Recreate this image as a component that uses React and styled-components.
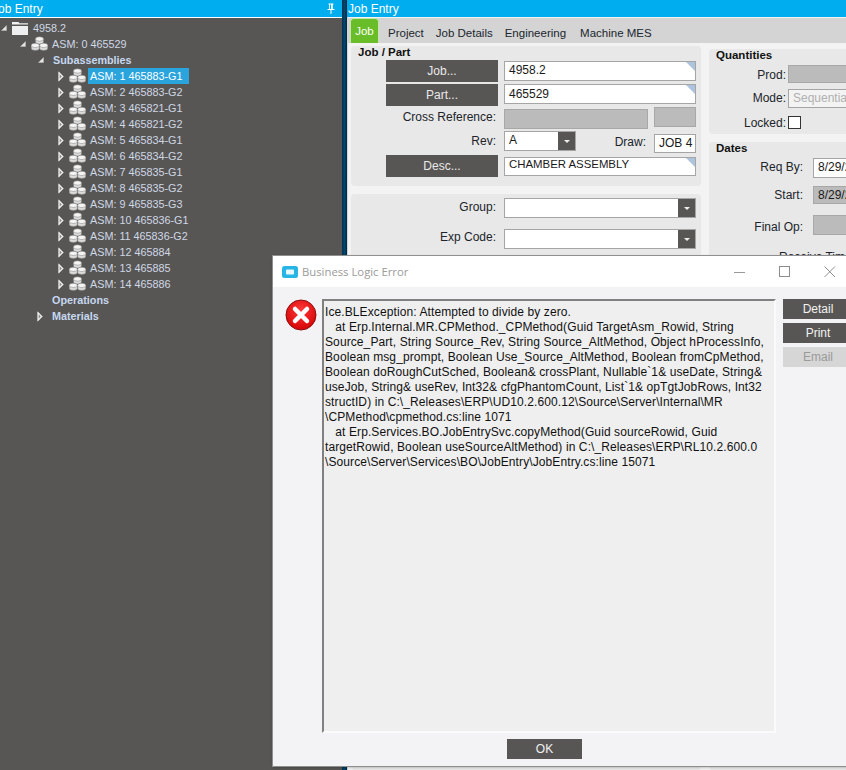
import React from "react";
import styled, { createGlobalStyle } from "styled-components";

const Global = createGlobalStyle`
  html, body { margin: 0; padding: 0; background: #585654; }
  #root { width: 846px; height: 770px; }
  * { box-sizing: border-box; }
`;

const Page = styled.div`
  position: relative;
  width: 846px;
  height: 770px;
  overflow: hidden;
  display: flex;
  font-family: "Liberation Sans", Arial, sans-serif;
  font-size: 12px;
`;

const TitleBar = styled.div`
  height: 17px;
  flex: none;
  background: #00adef;
  color: #fff;
  display: flex;
  align-items: center;
  justify-content: space-between;
  font-size: 12px;
  padding: ${(p) => (p.$cut ? "0 7px 0 0" : "0 0 0 1px")};
  margin-bottom: 1px;
`;

const CutTitle = styled.span`
  margin-left: -8px;
`;

const LeftPanel = styled.aside`
  width: 342px;
  flex: none;
  display: flex;
  flex-direction: column;
  background: #585654;
  box-shadow: inset 0 18px 0 #fff;
`;

const Tree = styled.div`
  padding-top: 2px;
  display: flex;
  flex-direction: column;
`;

const TreeRow = styled.div`
  height: 16px;
  display: flex;
  align-items: center;
  padding-left: ${(p) => p.$pad}px;
`;

const Toggle = styled.span`
  width: 11px;
  height: 16px;
  flex: none;
  display: flex;
  align-items: center;
`;

const NodeLabel = styled.span`
  margin-left: ${(p) => (p.$bare ? 2 : 3)}px;
  padding: 0 2px;
  height: 16px;
  line-height: 16px;
  color: ${(p) => (p.$selected ? "#ffffff" : p.$bold ? "#c6d8f0" : "#cfd8e6")};
  background: ${(p) => (p.$selected ? "#29a4dc" : "transparent")};
  font-weight: ${(p) => (p.$bold ? 700 : 400)};
  font-size: 10.8px;
  min-width: ${(p) => (p.$selected ? "101px" : "0")};
  white-space: nowrap;
`;

const Divider = styled.div`
  width: 5px;
  flex: none;
  background: linear-gradient(90deg, #06314e, #00466d 50%, #04263d);
`;

const RightPanel = styled.main`
  flex: 1;
  min-width: 0;
  display: flex;
  flex-direction: column;
  background: #f3f3f3;
  box-shadow: inset 1px 0 0 #cfd6da;
`;

const TabStrip = styled.nav`
  height: 25px;
  flex: none;
  background: #d4d4d4;
  display: flex;
  align-items: flex-end;
  padding-left: 3px;
`;

const ActiveTab = styled.div`
  width: 29px;
  height: 25px;
  background: #69bd28;
  border: 1px solid #c5e5ab;
  border-bottom: 0;
  border-radius: 4px 4px 0 0;
  color: #fff;
  text-align: center;
  line-height: 24px;
  font-size: 11.5px;
  margin-right: 9px;
`;

const Tab = styled.div`
  height: 25px;
  line-height: 30px;
  color: #20262e;
  font-size: 11.5px;
  margin-right: ${(p) => p.$gap || 0}px;
  white-space: nowrap;
`;

const Columns = styled.div`
  flex: 1;
  min-height: 0;
  display: flex;
  gap: 8px;
  padding: 3px 0 0 4px;
`;

const LeftCol = styled.div`
  width: 350px;
  flex: none;
  display: flex;
  flex-direction: column;
  gap: 8px;
`;

const RightCol = styled.div`
  flex: 1;
  min-width: 0;
  display: flex;
  flex-direction: column;
  gap: 8px;
  margin-top: 3px;
`;

const Group = styled.section`
  background: #e8e8e8;
  border-radius: 4px;
  display: flex;
  flex-direction: column;
  flex: ${(p) => (p.$grow ? 1 : "none")};
  height: ${(p) => (p.$h ? `${p.$h}px` : "auto")};
  padding-top: ${(p) => p.$top || 0}px;
  padding-bottom: ${(p) => p.$bottom || 0}px;
  gap: ${(p) => p.$gap ?? 2}px;
  margin-right: ${(p) => (p.$open ? "-20px" : "0")};
`;

const GroupTitle = styled.h3`
  margin: 0;
  font-size: 11.5px;
  line-height: 12px;
  height: 14px;
  font-weight: 700;
  color: #111;
  padding-left: 7px;
  margin-bottom: ${(p) => p.$after ?? -2}px;
`;

const Row = styled.div`
  display: flex;
  align-items: flex-start;
  height: ${(p) => p.$h || 22}px;
`;

const ActionButton = styled.button`
  margin-left: 35px;
  margin-right: 6px;
  width: 112px;
  height: 22px;
  border: 0;
  padding: 0;
  flex: none;
  background: #585654;
  color: #e9e9e9;
  font: 12px "Liberation Sans", Arial, sans-serif;
`;

const Label = styled.div`
  width: ${(p) => p.$w || 145}px;
  flex: none;
  text-align: right;
  color: #20242a;
  font-size: 12px;
  line-height: 18px;
  margin-top: ${(p) => p.$mt || 0}px;
  margin-right: ${(p) => p.$mr ?? 8}px;
  white-space: nowrap;
`;

const Input = styled.div`
  position: relative;
  width: ${(p) => (p.$w ? `${p.$w}px` : "auto")};
  height: ${(p) => p.$h || 20}px;
  flex: ${(p) => (p.$w ? "none" : 1)};
  margin-top: ${(p) => p.$mt || 0}px;
  margin-left: ${(p) => p.$ml || 0}px;
  background: ${(p) => (p.$off ? "#bbbbbb" : p.$plain ? "#f3f3f3" : "#fff")};
  border: 1px solid ${(p) => (p.$off ? "#a8a8a8" : "#a5a5a5")};
  color: ${(p) => (p.$muted ? "#b0b0b0" : "#1a1a1a")};
  font-size: ${(p) => p.$fs || 12}px;
  line-height: ${(p) => p.$lh || 16}px;
  padding: 0 4px;
  overflow: hidden;
  white-space: nowrap;
  ${(p) =>
    p.$corner
      ? `&::after {
          content: "";
          position: absolute;
          top: 0;
          right: 0;
          border-style: solid;
          border-width: 0 9px 9px 0;
          border-color: transparent #aec4de transparent transparent;
        }`
      : ""}
`;

const ComboArrow = styled.span`
  position: absolute;
  right: 0;
  top: 0;
  bottom: 0;
  width: 17px;
  background: #585654;
  display: flex;
  align-items: center;
  justify-content: center;
  &::before {
    content: "";
    border-style: solid;
    border-width: 3px 3px 0 3px;
    border-color: #eee transparent transparent transparent;
  }
`;

const CheckBox = styled.div`
  width: 13px;
  height: 13px;
  margin-top: 2px;
  background: #fff;
  border: 1px solid #333;
`;

const Cut = styled.div`
  font-size: 12px;
  color: #20242a;
  padding-left: 70px;
  line-height: 14px;
  white-space: nowrap;
`;

const Dialog = styled.div`
  position: absolute;
  left: 273px;
  top: 256px;
  width: 580px;
  height: 510px;
  background: #f3f3f6;
  display: flex;
  flex-direction: column;
  box-shadow: 0 0 0 1px #8f8f8f, 0 1px 3px rgba(0, 0, 0, 0.35);
`;

const DialogTitle = styled.header`
  height: 31px;
  flex: none;
  background: #fff;
  display: flex;
  align-items: center;
  padding-left: 9px;
  color: #9a9a9a;
  font-family: "Open Sans", "Noto Sans", sans-serif;
  font-size: 11.3px;
`;

const AppMark = styled.svg`
  width: 16px;
  height: 12px;
  margin-right: 4px;
`;

const WindowButtons = styled.div`
  margin-left: auto;
  display: flex;
`;

const WindowButton = styled.svg`
  width: ${(p) => p.$w || 45}px;
  height: 12px;
  display: block;
`;

const DialogBody = styled.div`
  flex: 1;
  min-height: 0;
  display: flex;
  align-items: flex-start;
  padding: 12px 0 0 12px;
`;

const ErrorIcon = styled.svg`
  width: 32px;
  height: 32px;
  flex: none;
  margin-right: 5px;
`;

const MessageBox = styled.pre`
  width: 454px;
  height: 434px;
  flex: none;
  margin: 0;
  background: #efefef;
  border-style: solid;
  border-width: 2px;
  border-color: #808080 #fafafa #fafafa #808080;
  padding: 4px 0 0 1px;
  font: 12px/15px "Liberation Sans", Arial, sans-serif;
  letter-spacing: 0.1px;
  color: #111;
  white-space: pre;
  overflow: hidden;
`;

const SideButtons = styled.div`
  margin-left: 7px;
  display: flex;
  flex-direction: column;
  gap: 4px;
  flex: 1;
`;

const DialogButton = styled.button`
  height: 20px;
  width: ${(p) => p.$w || "auto"};
  border: 0;
  padding: 0;
  background: ${(p) => (p.$off ? "#d6d6d6" : "#585654")};
  color: ${(p) => (p.$off ? "#9a9a9a" : "#f2f2f2")};
  font: 12px "Liberation Sans", Arial, sans-serif;
`;

const DialogFooter = styled.footer`
  height: 32px;
  flex: none;
  display: flex;
  justify-content: center;
  padding: 5px 33px 0 0;
  margin-right: 4px;
`;

const Collapse = () => (
  <svg width="6" height="6" viewBox="0 0 6 6">
    <path d="M0.5 5.5 L5.5 0.5 V5.5 Z" fill="#e4e4e4" stroke="#bbb" strokeWidth="0.5" />
  </svg>
);

const Expand = () => (
  <svg width="6" height="11" viewBox="0 0 6 11">
    <path d="M0.7 0.8 L5.3 5.5 L0.7 10.2 Z" fill="#fff" stroke="#d0d0d0" strokeWidth="0.8" />
    <path d="M1.6 3 L3.8 5.5 L1.6 8 Z" fill="#8b8b8b" />
  </svg>
);

const Drum = ({ x, y }) => (
  <g>
    <path
      d={`M${x - 4} ${y - 1.2} V${y + 1.6} A4 2.2 0 0 0 ${x + 4} ${y + 1.6} V${y - 1.2} Z`}
      fill="#dcdcdc"
      stroke="#6f6f6f"
      strokeWidth="0.4"
    />
    <ellipse cx={x} cy={y - 1.2} rx="4" ry="2.2" fill="#f4f4f4" stroke="#7c7c7c" strokeWidth="0.5" />
  </g>
);

const Assembly = () => (
  <svg width="17" height="16" viewBox="0 0 17 16" style={{ flex: "none" }}>
    <Drum x={8.5} y={4.2} />
    <Drum x={4.3} y={10.6} />
    <Drum x={12.7} y={10.6} />
  </svg>
);

const Folder = () => (
  <svg width="16" height="14" viewBox="0 0 16 14" style={{ flex: "none" }}>
    <path d="M0 1 H6.5 L7.5 2.2 H16 V3.5 H0 Z" fill="#f0f0f0" />
    <path d="M0 5 H16 V14 H0 Z" fill="#efefef" />
  </svg>
);

const Pin = () => (
  <svg width="8" height="11" viewBox="0 0 8 11">
    <path d="M1.5 0.5 H6.5 V1.5 H5.8 V6 H7.5 V7 H4.5 V11 H3.5 V7 H0.5 V6 H2.2 V1.5 H1.5 Z" fill="#fff" />
    <rect x="3" y="1.5" width="1" height="4.5" fill="#00adef" />
  </svg>
);

const assemblies = [
  "ASM: 1 465883-G1",
  "ASM: 2 465883-G2",
  "ASM: 3 465821-G1",
  "ASM: 4 465821-G2",
  "ASM: 5 465834-G1",
  "ASM: 6 465834-G2",
  "ASM: 7 465835-G1",
  "ASM: 8 465835-G2",
  "ASM: 9 465835-G3",
  "ASM: 10 465836-G1",
  "ASM: 11 465836-G2",
  "ASM: 12 465884",
  "ASM: 13 465885",
  "ASM: 14 465886",
];

const message = `Ice.BLException: Attempted to divide by zero.
   at Erp.Internal.MR.CPMethod._CPMethod(Guid TargetAsm_Rowid, String
Source_Part, String Source_Rev, String Source_AltMethod, Object hProcessInfo,
Boolean msg_prompt, Boolean Use_Source_AltMethod, Boolean fromCpMethod,
Boolean doRoughCutSched, Boolean& crossPlant, Nullable\`1& useDate, String&
useJob, String& useRev, Int32& cfgPhantomCount, List\`1& opTgtJobRows, Int32
structID) in C:\\_Releases\\ERP\\UD10.2.600.12\\Source\\Server\\Internal\\MR
\\CPMethod\\cpmethod.cs:line 1071
   at Erp.Services.BO.JobEntrySvc.copyMethod(Guid sourceRowid, Guid
targetRowid, Boolean useSourceAltMethod) in C:\\_Releases\\ERP\\RL10.2.600.0
\\Source\\Server\\Services\\BO\\JobEntry\\JobEntry.cs:line 15071`;

export default function App() {
  return (
    <Page>
      <Global />
      <LeftPanel>
        <TitleBar $cut>
          <CutTitle>Job Entry</CutTitle>
          <Pin />
        </TitleBar>
        <Tree>
          <TreeRow $pad={1}>
            <Toggle><Collapse /></Toggle>
            <Folder />
            <NodeLabel>4958.2</NodeLabel>
          </TreeRow>
          <TreeRow $pad={20}>
            <Toggle><Collapse /></Toggle>
            <Assembly />
            <NodeLabel $bare>ASM: 0 465529</NodeLabel>
          </TreeRow>
          <TreeRow $pad={38}>
            <Toggle><Collapse /></Toggle>
            <NodeLabel $bare $bold>Subassemblies</NodeLabel>
          </TreeRow>
          {assemblies.map((name, i) => (
            <TreeRow $pad={58} key={name}>
              <Toggle><Expand /></Toggle>
              <Assembly />
              <NodeLabel $bare $selected={i === 0}>{name}</NodeLabel>
            </TreeRow>
          ))}
          <TreeRow $pad={37}>
            <Toggle />
            <NodeLabel $bare $bold>Operations</NodeLabel>
          </TreeRow>
          <TreeRow $pad={37}>
            <Toggle><Expand /></Toggle>
            <NodeLabel $bare $bold>Materials</NodeLabel>
          </TreeRow>
        </Tree>
      </LeftPanel>
      <Divider />
      <RightPanel>
        <TitleBar>
          <span>Job Entry</span>
        </TitleBar>
        <TabStrip>
          <ActiveTab>Job</ActiveTab>
          <Tab $gap={12}>Project</Tab>
          <Tab $gap={12}>Job Details</Tab>
          <Tab $gap={14}>Engineering</Tab>
          <Tab>Machine MES</Tab>
        </TabStrip>
        <Columns>
          <LeftCol>
            <Group $bottom={9}>
              <GroupTitle>Job / Part</GroupTitle>
              <Row>
                <ActionButton>Job...</ActionButton>
                <Input $w={192} $mt={1} $corner>4958.2</Input>
              </Row>
              <Row>
                <ActionButton>Part...</ActionButton>
                <Input $w={192} $corner $lh={18}>465529</Input>
              </Row>
              <Row $h={21}>
                <Label>Cross Reference:</Label>
                <Input $w={144} $mt={1} $off />
                <Input $w={42} $mt={-1} $ml={6} $off />
              </Row>
              <Row>
                <Label $mt={1}>Rev:</Label>
                <Input $w={72}>
                  A
                  <ComboArrow />
                </Input>
                <Label $w={70} $mt={2}>Draw:</Label>
                <Input $w={42} $mt={3} $h={19}>JOB 4</Input>
              </Row>
              <Row>
                <ActionButton>Desc...</ActionButton>
                <Input $w={192} $mt={2} $h={19} $corner $fs={11.4} $lh={13}>CHAMBER ASSEMBLY</Input>
              </Row>
            </Group>
            <Group $grow $top={4} $gap={0}>
              <Row $h={31}>
                <Label>Group:</Label>
                <Input $w={192}><ComboArrow /></Input>
              </Row>
              <Row $h={31}>
                <Label $mt={-1}>Exp Code:</Label>
                <Input $w={192}><ComboArrow /></Input>
              </Row>
            </Group>
          </LeftCol>
          <RightCol>
            <Group $h={85} $open $gap={0}>
              <GroupTitle $after={2}>Quantities</GroupTitle>
              <Row $h={24}>
                <Label $w={77} $mr={2} $mt={1}>Prod:</Label>
                <Input $off $h={18} />
              </Row>
              <Row $h={26}>
                <Label $w={77} $mr={2}>Mode:</Label>
                <Input $h={19} $muted $plain>Sequential</Input>
              </Row>
              <Row $h={20}>
                <Label $w={77} $mr={2}>Locked:</Label>
                <CheckBox />
              </Row>
            </Group>
            <Group $grow $open $gap={0}>
              <GroupTitle $after={0}>Dates</GroupTitle>
              <Row $h={30}>
                <Label $w={94} $mr={10} $mt={2}>Req By:</Label>
                <Input $h={20} $mt={2}>8/29/2022</Input>
              </Row>
              <Row $h={29}>
                <Label $w={94} $mr={10}>Start:</Label>
                <Input $off $h={18}>8/29/2022</Input>
              </Row>
              <Row $h={35}>
                <Label $w={94} $mr={10} $mt={3}>Final Op:</Label>
                <Input $off $h={20} />
              </Row>
              <Cut>Receive Time</Cut>
            </Group>
          </RightCol>
        </Columns>
      </RightPanel>
      <Dialog>
        <DialogTitle>
          <AppMark viewBox="0 0 16 12">
            <rect x="0" y="0" width="16" height="12" rx="2.5" fill="#27b5e6" />
            <rect x="4" y="3.5" width="8" height="5" rx="1" fill="#e9f8fd" />
          </AppMark>
          Business Logic Error
          <WindowButtons>
            <WindowButton viewBox="0 0 45 12">
              <path d="M17 6.5 H28" stroke="#9a9a9a" strokeWidth="1" />
            </WindowButton>
            <WindowButton viewBox="0 0 45 12">
              <rect x="17.5" y="0.5" width="10" height="10" fill="none" stroke="#8c8c8c" />
            </WindowButton>
            <WindowButton viewBox="0 0 45 12" $w={46}>
              <path d="M17 0.5 L27.5 11 M27.5 0.5 L17 11" stroke="#8c8c8c" strokeWidth="1" />
            </WindowButton>
          </WindowButtons>
        </DialogTitle>
        <DialogBody>
          <ErrorIcon viewBox="0 0 32 32">
            <defs>
              <radialGradient id="errorRed" cx="50%" cy="35%" r="70%">
                <stop offset="0%" stopColor="#ff3a3a" />
                <stop offset="100%" stopColor="#d10000" />
              </radialGradient>
            </defs>
            <circle cx="16" cy="16" r="15" fill="url(#errorRed)" stroke="#8c1010" strokeWidth="1" />
            <path d="M10 10 L22 22 M22 10 L10 22" stroke="#fff" strokeWidth="4.5" strokeLinecap="round" />
          </ErrorIcon>
          <MessageBox>{message}</MessageBox>
          <SideButtons>
            <DialogButton>Detail</DialogButton>
            <DialogButton>Print</DialogButton>
            <DialogButton $off>Email</DialogButton>
          </SideButtons>
        </DialogBody>
        <DialogFooter>
          <DialogButton $w="75px">OK</DialogButton>
        </DialogFooter>
      </Dialog>
    </Page>
  );
}
